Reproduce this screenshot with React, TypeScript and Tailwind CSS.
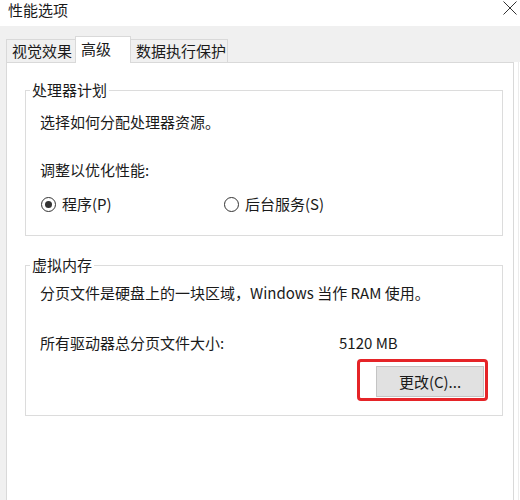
import React from "react";

function Radio({ checked }: { checked: boolean }) {
  return (
    <span className="flex h-[15px] w-[15px] items-center justify-center rounded-full border border-[#333333] bg-white">
      {checked && <span className="h-[7px] w-[7px] rounded-full bg-[#333333]" />}
    </span>
  );
}

export default function App() {
  return (
    <div className="flex h-[500px] w-[520px] flex-col overflow-hidden bg-white font-['Microsoft_YaHei','Noto_Sans_CJK_SC',sans-serif] text-[15px] leading-[20px] text-[#1a1a1a]">
      {/* Title bar */}
      <div className="flex h-[26px] shrink-0 items-start justify-between pl-[8px] pr-[3px]">
        <span className="leading-[20px]">性能选项</span>
        <svg width="14" height="14" viewBox="0 0 14 14" className="mt-[1px]">
          <path d="M0.5 0.5 L13.5 13.5 M13.5 0.5 L0.5 13.5" stroke="#333333" strokeWidth="1" fill="none" />
        </svg>
      </div>

      {/* Tabs */}
      <div className="flex h-[36px] shrink-0 items-end bg-[#f0f0f0] pl-[6px]">
        <div className="flex h-[23px] w-[69px] items-center border-l border-t border-[#d9d9d9] bg-[#f0f0f0] pl-[5px]">
          视觉效果
        </div>
        <div className="relative z-10 -mb-px flex h-[27px] w-[56px] items-start border-l border-r border-t border-[#d9d9d9] bg-white pl-[5px] pt-[2px]">
          高级
        </div>
        <div className="flex h-[23px] w-[97px] items-center border-r border-t border-[#d9d9d9] bg-[#f0f0f0] pl-[5px]">
          数据执行保护
        </div>
      </div>

      {/* Body */}
      <div className="flex flex-1">
        <div className="w-[6px] shrink-0 bg-[#f0f0f0]" />
        <div className="w-[508px] shrink-0 border-l border-r border-t border-[#d9d9d9] bg-white pl-[18px]">
          {/* Group 1 */}
          <fieldset className="mt-[17px] w-[478px] border border-[#dcdcdc] px-[4px] pb-[21px]">
            <legend className="px-[2px]">处理器计划</legend>
            <div className="px-[10px]">
              <p className="mt-[12px]">选择如何分配处理器资源。</p>
              <p className="mt-[28px]">调整以优化性能:</p>
              <div className="mt-[14px] flex h-[20px] items-center">
                <div className="flex w-[184px] items-center gap-[6px] pl-[1px]">
                  <Radio checked />
                  <span>程序(P)</span>
                </div>
                <div className="flex items-center gap-[6px]">
                  <Radio checked={false} />
                  <span>后台服务(S)</span>
                </div>
              </div>
            </div>
          </fieldset>

          {/* Group 2 */}
          <fieldset className="mt-[19px] w-[478px] border border-[#dcdcdc] px-[4px] pb-[14px]">
            <legend className="px-[2px]">虚拟内存</legend>
            <div className="px-[10px]">
              <p className="mt-[8px]">分页文件是硬盘上的一块区域，Windows 当作 RAM 使用。</p>
              <div className="mt-[30px] flex">
                <span className="w-[299px]">所有驱动器总分页文件大小:</span>
                <span>5120 MB</span>
              </div>
              <div className="mt-[6px] flex justify-end">
                <div className="rounded-[4px] border-[3px] border-[#e52428] pb-[1px] pl-[16px] pr-[1px] pt-[4px]">
                  <button className="flex h-[31px] w-[108px] items-center justify-center border border-[#c4c4c4] bg-[#e1e1e1] text-[15px] text-[#1a1a1a]">
                    更改(C)...
                  </button>
                </div>
              </div>
            </div>
          </fieldset>
        </div>
        <div className="w-[4px] shrink-0 bg-white" />
        <div className="w-px shrink-0 bg-[#ececec]" />
        <div className="flex-1 bg-white" />
      </div>
    </div>
  );
}
